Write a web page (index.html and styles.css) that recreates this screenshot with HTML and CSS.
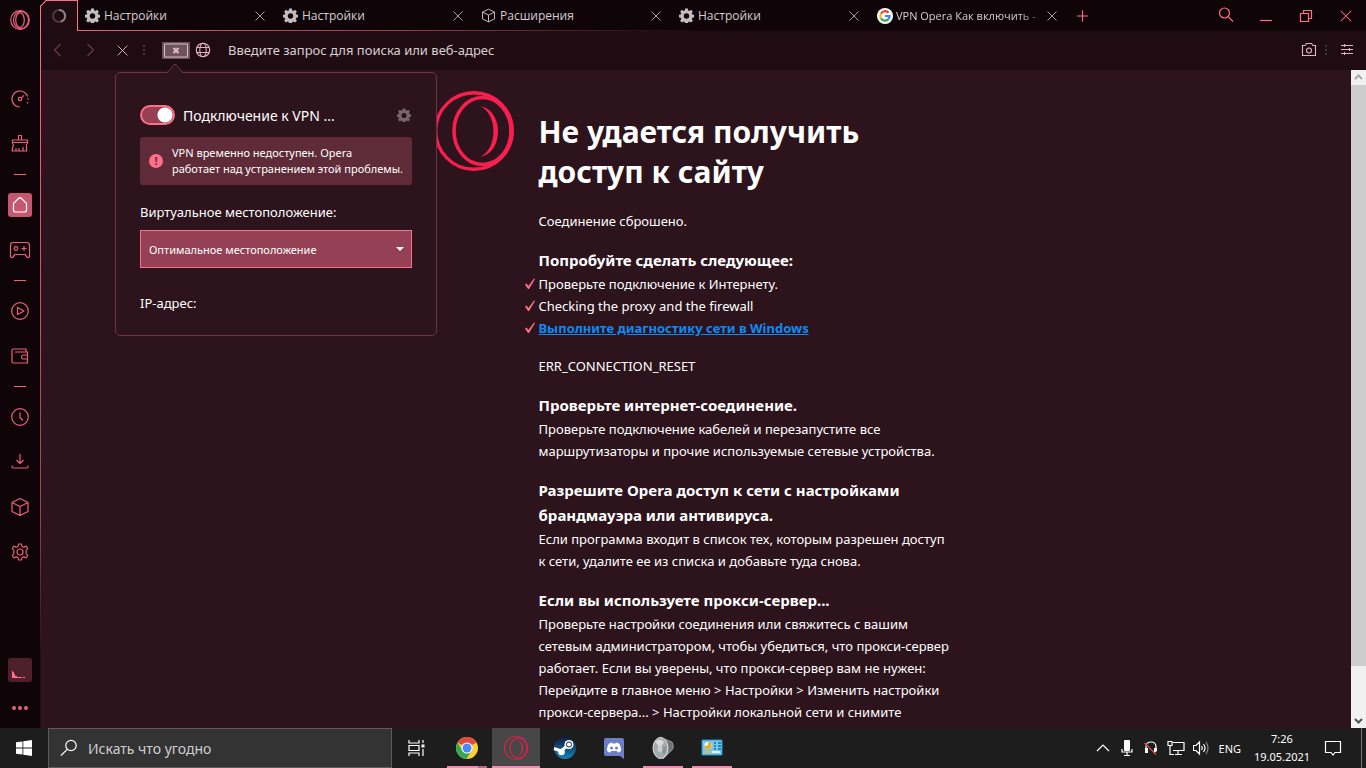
FILE: index.html
```html
<!DOCTYPE html>
<html lang="ru">
<head>
<meta charset="utf-8">
<title>Не удается получить доступ к сайту</title>
<link rel="stylesheet" href="styles.css">
</head>
<body>
<svg class="sprite" aria-hidden="true">
  <symbol id="gear-solid" viewBox="0 0 16 16"><path fill-rule="evenodd" d="M6.500 .5h3l.4 2.100 1.100.5 1.800-1.200 2 2-1.200 1.800.5 1.200 1.900.4v2.800l-1.900.4-.5 1.200 1.200 1.800-2 2-1.800-1.200-1.100.5-.4 2.100h-3l-.4-2.100-1.100-.5-1.800 1.200-2-2 1.200-1.800-.5-1.200L0 10.100V7.300l1.900-.4.5-1.200-1.200-1.800 2-2 1.800 1.200 1.100-.5zM8 5.600a2.900 2.900 0 1 0 0 5.800 2.900 2.900 0 0 0 0-5.800z"/></symbol>
  <symbol id="cross" viewBox="0 0 12 12"><path d="M1.500 1.500l9 9M10.500 1.500l-9 9" fill="none" stroke="currentColor" stroke-width=".9"/></symbol>
  <symbol id="cube" viewBox="0 0 20 20"><path d="M10 1.500l8 4v9l-8 4-8-4v-9zM2 5.500l8 4 8-4M10 9.500v9" fill="none" stroke="currentColor" stroke-width="1.200" stroke-linejoin="round"/></symbol>
  <symbol id="opera" viewBox="0 0 80 80"><g fill="none" stroke="currentColor"><circle cx="40" cy="40" r="38.300" stroke-width="3.400"/><ellipse cx="48.500" cy="40" rx="28.500" ry="33.500" stroke-width="3.600"/></g><path fill="currentColor" d="M46 15C70 19 70 62 46 66 64 58 64 23 46 15z"/></symbol>
  <symbol id="check" viewBox="0 0 12 12"><path d="M1 6.500L2.500 5.500 4.500 8 10 .5 11 1 5 11H4z" fill="currentColor"/></symbol>
</svg>

<div class="desktop">
<main class="window">
  <nav class="sidebar" aria-label="Боковая панель">
    <button class="side-logo" aria-label="Opera"><svg viewBox="0 0 20 20" width="20" height="20" fill="none" stroke="currentColor"><circle cx="10" cy="10" r="9.300"/><ellipse cx="11" cy="10" rx="7.500" ry="8.600"/><ellipse cx="10" cy="10" rx="4.300" ry="7.300"/></svg></button>
    <div class="side-group">
      <button aria-label="Скорость"><svg viewBox="0 0 20 20" width="20" height="20"><path d="M10 18A8 8 0 1 1 17.500 7.500M11.200 9.200L14 6.300"/><circle cx="10" cy="10" r="1.700"/><path d="M18 9v2.500M17.500 13v1.500" stroke-dasharray="1.500 1"/></svg></button>
      <button aria-label="Очистка"><svg viewBox="0 0 20 20" width="20" height="20"><path d="M8.500 6V1.500h3V6M2.500 10V6h15v4M2.500 8.500h15M3.500 10L2 17h14.500V10M6 14v3M9 14v3M13 13v4"/></svg></button>
    </div>
    <hr>
    <div class="side-group">
      <button class="home" aria-label="Главная"><svg viewBox="0 0 20 20" width="20" height="20"><path d="M3.500 8.500L8.500 3.500q1.500-1.500 3 0l5 5V15q0 2-2 2h-9q-2 0-2-2z"/></svg></button>
      <button aria-label="Игры"><svg viewBox="0 0 22 20" width="22" height="20"><path d="M4 2.500h14q2 0 2.500 3V16q0 2-2 1.500L16 14.500H6L3.500 17.500Q1.500 18 1.500 16V5.500q0-3 2.500-3z"/><circle cx="7" cy="8.500" r="1.800"/><path d="M15 6v5M12.500 8.500h5"/></svg></button>
    </div>
    <hr>
    <div class="side-group">
      <button aria-label="Плеер"><svg viewBox="0 0 20 20" width="20" height="20"><circle cx="10" cy="10" r="8.300"/><path d="M7.500 6.500v7l6.500-3.500z"/></svg></button>
      <button aria-label="Кошелек"><svg viewBox="0 0 20 20" width="20" height="20"><path d="M16 6V3H3.500Q2 3 2 4.500v11Q2 17 3.500 17h14V6H5M17.500 9H13q-1.500 0-1.500 2t1.500 2h4.500"/></svg></button>
    </div>
    <hr>
    <div class="side-group">
      <button aria-label="История"><svg viewBox="0 0 20 20" width="20" height="20"><circle cx="10" cy="10" r="8.300"/><path d="M10 5.500V10.500l3 3"/></svg></button>
      <button aria-label="Загрузки"><svg viewBox="0 0 20 20" width="20" height="20"><path d="M10 2v9M6.500 8l3.500 3.500L13.500 8M2 13.500v1q0 1.500 1.500 1.500h13q1.500 0 1.500-1.500v-1"/></svg></button>
      <button aria-label="Расширения"><svg width="20" height="20"><use href="#cube"/></svg></button>
      <button aria-label="Настройки"><svg viewBox="0 0 20 20" width="20" height="20"><path d="M8.500 2h3l.5 2.500 1.800.8L16 4l1.700 2.500-1.500 2v3l1.500 2L16 16l-2.200-1.200-1.800.8-.5 2.400h-3L8 15.600l-1.800-.8L4 16l-1.700-2.500 1.500-2v-3l-1.500-2L4 4l2.200 1.300L8 4.500z"/><circle cx="10" cy="10" r="3"/></svg></button>
    </div>
    <div class="side-bottom">
      <button class="meter" aria-label="GX Control"><svg viewBox="0 0 24 24" width="24" height="24"><path d="M4 13h1v1h1v2h1v2h2v1h5v1H4zM15 19h2v1h-2z"/></svg></button>
      <button class="more" aria-label="Ещё"><i></i><i></i><i></i></button>
    </div>
  </nav>

  <section class="browser">
    <header class="tabs">
      <button class="tab-active" aria-label="Загрузка"><svg viewBox="0 0 16 16" width="16" height="16" fill="none" stroke-width="2"><circle cx="8" cy="8" r="6" stroke="#4b3b42"/><path d="M8 2a6 6 0 0 1 2 11.700" stroke="#928389"/></svg></button>
      <div class="tab"><svg class="tab-icon"><use href="#gear-solid"/></svg><span>Настройки</span><button aria-label="Закрыть"><svg width="12" height="12"><use href="#cross"/></svg></button></div>
      <div class="tab"><svg class="tab-icon"><use href="#gear-solid"/></svg><span>Настройки</span><button aria-label="Закрыть"><svg width="12" height="12"><use href="#cross"/></svg></button></div>
      <div class="tab"><svg class="tab-icon"><use href="#cube"/></svg><span>Расширения</span><button aria-label="Закрыть"><svg width="12" height="12"><use href="#cross"/></svg></button></div>
      <div class="tab"><svg class="tab-icon"><use href="#gear-solid"/></svg><span>Настройки</span><button aria-label="Закрыть"><svg width="12" height="12"><use href="#cross"/></svg></button></div>
      <div class="tab"><svg class="tab-icon" viewBox="0 0 16 16"><circle cx="8" cy="8" r="8" fill="#fff"/><g fill="none" stroke-width="2.200"><path d="M11.500 4.700A4.700 4.700 0 0 0 3.900 5.700" stroke="#ea4335"/><path d="M3.900 5.700a4.700 4.700 0 0 0 0 4.600" stroke="#fbbc05"/><path d="M3.900 10.300a4.700 4.700 0 0 0 7.300 1.100" stroke="#34a853"/><path d="M11.200 11.400A4.700 4.700 0 0 0 12.600 8H8" stroke="#4285f4"/></g></svg><span class="fade">VPN Opera Как включить -</span><button aria-label="Закрыть"><svg width="12" height="12"><use href="#cross"/></svg></button></div>
      <button class="new-tab" aria-label="Новая вкладка"><svg viewBox="0 0 12 12" width="12" height="12"><path d="M6.500 .5v11M1 6h11"/></svg></button>
      <div class="controls">
        <button aria-label="Поиск"><svg viewBox="0 0 16 16" width="16" height="16"><circle cx="6.500" cy="5" r="5"/><path d="M10.200 8.700l4.800 4.800"/></svg></button>
        <button aria-label="Свернуть"><svg viewBox="0 0 12 12" width="12" height="12"><path d="M0 10.500h12"/></svg></button>
        <button aria-label="Развернуть"><svg viewBox="0 0 12 12" width="12" height="12"><path d="M.5 3.500h8v8h-8zM3.500 3V.5h8v8H9"/></svg></button>
        <button aria-label="Закрыть окно"><svg width="14" height="14"><use href="#cross"/></svg></button>
      </div>
    </header>

    <div class="toolbar">
      <button class="dim" aria-label="Назад"><svg viewBox="0 0 14 14" width="14" height="14"><path d="M9.500 1L3.500 7l6 6"/></svg></button>
      <button class="dim" aria-label="Вперед"><svg viewBox="0 0 14 14" width="14" height="14"><path d="M4.500 1l6 6-6 6"/></svg></button>
      <button aria-label="Остановить"><svg width="13" height="13"><use href="#cross"/></svg></button>
      <i class="dots"></i>
      <button class="vpn" aria-label="VPN"><svg viewBox="0 0 28 17" width="28" height="17"><rect x="2.500" y="2" width="23" height="13" rx="1"/><path d="M11.500 6l5 5M16.500 6l-5 5" stroke-width="2.400"/></svg></button>
      <svg class="globe" viewBox="0 0 16 16" width="16" height="16"><circle cx="8" cy="8" r="6.700"/><ellipse cx="8" cy="8" rx="3.200" ry="6.700"/><path d="M2 5.500h12M2 10.500h12"/></svg>
      <input class="address" type="text" aria-label="Адрес" placeholder="Введите запрос для поиска или веб-адрес">
      <button aria-label="Снимок"><svg viewBox="0 0 16 16" width="16" height="16"><path d="M1.500 3.500H4l1.500-2h5l1.500 2h2.500v10h-13z"/><circle cx="8" cy="8.500" r="2.500"/></svg></button>
      <i class="dots tail"></i>
      <button class="easy" aria-label="Простая настройка"><svg viewBox="0 0 14 14" width="14" height="14"><path d="M1 2.500h12M1 6.500h12M1 10.500h12M4.500 1v3M9.500 5v3M4.500 9v3"/></svg></button>
    </div>

    <div class="viewport">
      <article class="page">
        <svg class="brand"><use href="#opera"/></svg>
        <div class="copy">
          <h1>Не удается получить<br>доступ к сайту</h1>
          <p>Соединение сброшено.</p>
          <h2>Попробуйте сделать следующее:</h2>
          <ul>
            <li><svg><use href="#check"/></svg>Проверьте подключение к Интернету.</li>
            <li><svg><use href="#check"/></svg>Checking the proxy and the firewall</li>
            <li><svg><use href="#check"/></svg><a href="#">Выполните диагностику сети в Windows</a></li>
          </ul>
          <p>ERR_CONNECTION_RESET</p>
          <h2>Проверьте интернет-соединение.</h2>
          <p>Проверьте подключение кабелей и перезапустите все<br>маршрутизаторы и прочие используемые сетевые устройства.</p>
          <h2>Разрешите Opera доступ к сети с настройками<br>брандмауэра или антивируса.</h2>
          <p>Если программа входит в список тех, которым разрешен доступ<br>к сети, удалите ее из списка и добавьте туда снова.</p>
          <h2>Если вы используете прокси-сервер...</h2>
          <p>Проверьте настройки соединения или свяжитесь с вашим<br>сетевым администратором, чтобы убедиться, что прокси-сервер<br>работает. Если вы уверены, что прокси-сервер вам не нужен:<br>Перейдите в главное меню &gt; Настройки &gt; Изменить настройки<br>прокси-сервера... &gt; Настройки локальной сети и снимите</p>
        </div>
      </article>
      <div class="scrollbar">
        <svg class="up" viewBox="0 0 15 15"><path d="M4 9l3.500-3.500L11 9"/></svg>
        <div class="track"><div class="thumb"></div></div>
        <svg class="down" viewBox="0 0 15 15"><path d="M4 6l3.500 3.500L11 6"/></svg>
      </div>
    </div>

    <aside class="popover">
      <svg class="pointer" viewBox="0 0 18 10" width="18" height="10"><path d="M1 10L7.500 2q1.500-1.500 3 0L17 10"/></svg>
      <div class="switch-row">
        <input type="checkbox" id="vpn" checked>
        <label for="vpn">Подключение к VPN ...</label>
        <button aria-label="Настройки VPN"><svg width="14" height="14"><use href="#gear-solid"/></svg></button>
      </div>
      <div class="alert"><b>!</b><span>VPN временно недоступен. Opera<br>работает над устранением этой проблемы.</span></div>
      <label class="place-label" for="place">Виртуальное местоположение:</label>
      <div class="select-box"><select id="place"><option>Оптимальное местоположение</option></select><i></i></div>
      <div class="ip">IP-адрес:</div>
    </aside>
  </section>
</main>

<footer class="taskbar">
  <button class="start" aria-label="Пуск"><svg viewBox="0 0 16 16" width="16" height="16" fill="#fff"><path d="M0 2.300L6.500 1.400v6.200H0zM7.300 1.300L16 0v7.600H7.300zM0 8.400h6.500v6.200L0 13.700zM7.300 8.400H16V16l-8.700-1.300z"/></svg></button>
  <div class="find"><svg viewBox="0 0 18 18" width="18" height="18"><circle cx="11" cy="6.500" r="5.200"/><path d="M7.200 10.300L1 16.500"/></svg><input type="text" aria-label="Поиск" placeholder="Искать что угодно"></div>
  <button class="start" aria-label="Представление задач"><svg viewBox="0 0 17 16" width="17" height="16" fill="none" stroke="#fff" stroke-width="1.200"><path d="M1 0v3h10V0M1 16v-3h10v3M1 5.500h10v5H1zM15 0v3M15 9v7"/><path d="M13.500 4.500h3v3h-3z" fill="#fff" stroke="none"/></svg></button>
  <div class="apps">
    <button class="open more-windows" aria-label="Chrome"><svg viewBox="0 0 24 24" width="24" height="24"><circle cx="12" cy="12" r="11" fill="#fbcf3b"/><path d="M12 12L2.500 6.500A11 11 0 0 1 21.500 6.500z" fill="#e2493b"/><path d="M2.500 6.500A11 11 0 0 0 11.500 23L16.500 14.500 7.500 14.500z" fill="#35a852"/><circle cx="12" cy="12" r="5.600" fill="#fff"/><circle cx="12" cy="12" r="4.500" fill="#4a8af4"/></svg></button>
    <button class="active" aria-label="Opera"><svg class="gx" width="24" height="24"><use href="#opera"/></svg></button>
    <button aria-label="Steam"><svg viewBox="0 0 24 24" width="24" height="24"><defs><linearGradient id="st" x2="0" y2="1"><stop stop-color="#101b3e"/><stop offset="1" stop-color="#1583b9"/></linearGradient></defs><circle cx="12" cy="12" r="11" fill="url(#st)"/><path d="M1 12.500l7 2.500 6-5" fill="none" stroke="#fff" stroke-width="3"/><circle cx="8.500" cy="16" r="3.300" fill="#fff"/><circle cx="16" cy="8.500" r="4.500" fill="#fff"/><circle cx="16" cy="8.500" r="2.600" fill="#fff" stroke="#12244c"/></svg></button>
    <button aria-label="Discord"><svg viewBox="0 0 24 24" width="24" height="24"><path d="M4 2h16q2 0 2 2v19l-4-3H4q-2 0-2-2V4q0-2 2-2z" fill="#6c7fc4"/><path d="M7 7.500l3-1 .5 1h3l.5-1 3 1c1.500 2 2.200 5 2 7.500l-3 1.700-1.200-1.700H9.200L8 16.700 5 15c-.2-2.500.5-5.500 2-7.500z" fill="#fff"/><circle cx="9.500" cy="12" r="1.500" fill="#6c7fc4"/><circle cx="14.500" cy="12" r="1.500" fill="#6c7fc4"/></svg></button>
    <button class="open" aria-label="Звук"><svg viewBox="0 0 24 24" width="24" height="24"><path d="M9 1l12 5q3 6-1 9l-8 8z" fill="#6f7375" stroke="#aaa" stroke-width=".8"/><ellipse cx="9.500" cy="12" rx="7.500" ry="10.500" fill="#a5aaac" stroke="#dcdcdc"/><path d="M9 12L4 5.500Q9 2 13 6z" fill="#d9dcdd"/><path d="M9 12l6-2q1 6-2 9z" fill="#8c9193"/><ellipse cx="9" cy="13" rx="2.500" ry="3.500" fill="#c8cccd"/></svg></button>
    <button class="open" aria-label="Панель управления"><svg viewBox="0 0 24 24" width="24" height="24"><path d="M2 4h20v15H2z" fill="#73cbf0" stroke="#288fc6"/><circle cx="8" cy="9.500" r="3.500" fill="#fff"/><path d="M8 9.500V6a3.500 3.500 0 1 1-3.500 3.500z" fill="#f5a91d"/><path d="M14 7h2M14 10h2M14 13h2M18 7h3M18 10h3M18 13h3" stroke="#1468a0" stroke-width="1.500"/><path d="M4 16h16" stroke="#fff" stroke-width="1.500"/><path d="M4 16h8" stroke="#dba624" stroke-width="1.500"/></svg></button>
  </div>
  <div class="tray">
    <svg viewBox="0 0 16 16" width="16" height="16"><path d="M2 11l6-6 6 6"/></svg>
    <svg viewBox="0 0 16 16" width="16" height="16"><rect x="5" y="0" width="6" height="11" rx="1" fill="#fff" stroke="none"/><path d="M3 9v3h10V9M8 12v3M5 15.500h6"/></svg>
    <svg viewBox="0 0 16 16" width="16" height="16"><path d="M3 10V7q0-5 5-5t5 5v4"/><path d="M2 8h3v5H2zM11 8h3v3l-3 2z" fill="#fff" stroke="none"/><path d="M1.500 3L13 14.500" stroke="#e04a4a"/></svg>
    <svg viewBox="0 0 18 16" width="18" height="16"><path d="M6 2.500h11v8H6M11 11v3M8 14.500h7M1 1.500h4v4H1zM3 5.500v9h4"/></svg>
    <svg viewBox="0 0 16 16" width="16" height="16"><path d="M.5 5.500H3l3.500-3.500v12L3 10.500H.5zM8.500 6q1.500 2 0 4M10.500 4q3 4 0 8"/><path d="M13 2q4 6 0 12" stroke="#888"/></svg>
    <span class="lang">ENG</span>
    <time class="clock">7:26<br>19.05.2021</time>
    <svg class="note" viewBox="0 0 18 18" width="18" height="18"><path d="M1.500 2.500h15v11H11l-2 2.500-2-2.500H1.500z"/></svg>
    <i class="peek"></i>
  </div>
</footer>
</div>
</body>
</html>
```
FILE: styles.css
```css
* { box-sizing: border-box; }
body { margin: 0; font-family: "Noto Sans", "Open Sans", sans-serif; font-size: 13px; color: #fff; background: #0f0508; }
button { margin: 0; padding: 0; border: 0; background: none; color: inherit; font: inherit; display: flex; align-items: center; justify-content: center; flex: none; }
input, select { font: inherit; color: inherit; }
svg { flex: none; display: block; }
.sprite { position: absolute; width: 0; height: 0; }
.desktop { height: 100vh; display: flex; flex-direction: column; overflow: hidden; }
.window { flex: 1; min-height: 0; display: flex; }

.sidebar { width: 40px; flex: none; display: flex; flex-direction: column; align-items: center; background: #0f0508; color: #e8627c; }
.sidebar svg { fill: none; stroke: currentColor; stroke-width: 1.2; stroke-linejoin: round; }
.side-logo { height: 40px; margin-bottom: 47px; }
.side-group { display: flex; flex-direction: column; gap: 21px; }
.side-group button { width: 24px; height: 24px; }
.sidebar hr { width: 12px; height: 1px; margin: 18px 0; border: 0; background: #e8627c; }
.side-group .home { background: #c65770; border-radius: 3px; color: #fff; }
.side-bottom { margin-top: auto; padding-bottom: 16px; display: flex; flex-direction: column; align-items: center; gap: 22px; }
.meter { width: 24px; height: 24px; border-radius: 3px; background: #4d202c; }
.sidebar .meter svg { fill: #ff7088; stroke: none; }
.more { gap: 2px; height: 8px; }
.more i { width: 4px; height: 4px; border-radius: 2px; background: #e8627c; }

.browser { flex: 1; min-width: 0; position: relative; display: flex; flex-direction: column; padding-left: 1px; background: linear-gradient(#ff6f87, #9c4054 70%, #1f0c13 90%) left 6px / 1px 100% no-repeat #0f0508; }
.tabs { height: 31px; flex: none; display: flex; background: linear-gradient(90deg, #f0647c, #8f3548 30%, #12060a 50%) bottom / 100% 1px no-repeat, #0f0508; }
.tab-active { width: 38px; margin-left: -1px; padding-left: 1px; background: linear-gradient(135deg, #0f0508 4px, #ff6f87 4px 5px, #1f0c13 5px); border-right: 1px solid #ff6f87; box-shadow: inset 1px 0 #ff6f87, inset 0 1px #ff6f87; clip-path: polygon(6px 0, 100% 0, 100% 100%, 0 100%, 0 6px); }
.tab { width: 198px; flex: 0 1 198px; min-width: 0; display: flex; align-items: center; gap: 4px; padding: 0 6px 0 7px; color: #d5cdd0; font-family: "Open Sans", sans-serif; font-size: 12px; }
.tab:nth-child(6) { gap: 3px; font-size: 11px; }
.tab-icon { width: 15px; height: 15px; fill: #c4bdc0; }
.tab:nth-child(6) .tab-icon { width: 16px; height: 16px; }
.tab span { flex: 1; white-space: nowrap; }
.tab .fade { -webkit-mask-image: linear-gradient(90deg, #000 85%, transparent 110%); mask-image: linear-gradient(90deg, #000 85%, transparent 110%); }
.tab button { width: 20px; height: 20px; color: #b9b0b3; }
.new-tab { width: 28px; color: #ff6f87; }
.new-tab svg, .controls svg { fill: none; stroke: currentColor; stroke-width: 1.2; }
.controls svg { overflow: visible; }
.controls { margin-left: auto; display: flex; color: #ff6f87; }
.controls button { width: 40px; }

.toolbar { height: 39px; flex: none; display: flex; align-items: center; padding: 0 3px 1px 1px; background: #1f0c13; color: #e6b3c2; }
.toolbar svg { fill: none; stroke: currentColor; stroke-width: 1.1; }
.toolbar button { width: 32px; height: 32px; }
.toolbar .dim { color: #6b3d4b; }
.dots { width: 2px; height: 10px; margin: 0 17px 0 5px; background: repeating-linear-gradient(#49303a 0 2px, transparent 2px 4px); }
.dots.tail { margin: 0 4px 0 0; }
.toolbar .vpn { width: 28px; height: 17px; background: #6b555d; }
.globe { margin-left: 5px; }
.address { flex: 1; min-width: 0; margin-left: 17px; padding: 0; border: 0; background: none; font-size: 13px; outline: 0; }
.address::placeholder { color: #d8cfd2; opacity: 1; }

.viewport { flex: 1; min-height: 0; display: flex; background: #2c131c; }
.page { flex: 1; min-width: 0; height: 100%; overflow: hidden; display: flex; justify-content: center; gap: 25px; padding-top: 21px; }
.brand { width: 80px; height: 80px; color: #fa1e4e; }
.copy { flex: 0 0 420px; padding-top: 21px; white-space: nowrap; }
h1 { margin: 0 0 18px; font-size: 30px; line-height: 40px; }
h2 { margin: 0; font-size: 15px; line-height: 25px; }
.copy p, .copy ul { margin: 0 0 16px; padding: 0; line-height: 22px; list-style: none; }
.copy li { display: flex; align-items: center; gap: 3px; margin-left: -15px; }
.copy li svg { width: 12px; height: 12px; color: #ff6f87; }
.copy a { color: #0a8cf8; font-weight: bold; }
.scrollbar { width: 15px; flex: none; display: flex; flex-direction: column; background: #f1f1f1; }
.scrollbar svg { width: 15px; height: 15px; fill: none; stroke: #505050; stroke-width: 2; }
.scrollbar .up { stroke: #a9a9a9; }
.track { flex: 1; }
.thumb { height: 92.5%; background: #cdcdcd; }

.popover { position: absolute; top: 72px; left: 75px; width: 322px; padding: 32px 24px 22px; background: #2c131c; border: 1px solid #6f3145; border-radius: 5px; }
.pointer { position: absolute; top: -10px; left: 50px; fill: #2c131c; stroke: #6f3145; }
.switch-row { display: flex; align-items: center; height: 20px; margin-bottom: 12px; font-size: 14px; }
.switch-row input { appearance: none; width: 35px; height: 20px; margin: 0 8px 0 0; border: 2px solid #ff6f87; border-radius: 10px; background: radial-gradient(circle at 23px 8px, #fff 7px, transparent 8px) #954054; }
.switch-row button { margin: 0 1px 0 auto; }
.switch-row svg { fill: #77666c; }
.alert { display: flex; align-items: center; gap: 9px; height: 48px; padding-left: 9px; border-radius: 3px; background: #602b38; font-size: 11px; line-height: 16px; white-space: nowrap; }
.alert b { width: 14px; height: 14px; flex: none; border-radius: 7px; background: #ff6f87; color: #602b38; text-align: center; line-height: 14px; }
.place-label { display: block; margin: 17px 0 8px; line-height: 20px; font-size: 13px; }
.select-box { position: relative; }
.select-box select { appearance: none; width: 100%; height: 38px; padding: 0 8px; border: 1px solid #ff6f87; border-radius: 0; background: #954054; font-size: 11px; }
.select-box i { position: absolute; right: 8px; top: 17px; border: 4px solid transparent; border-top-color: #fff; }
.ip { margin-top: 25px; line-height: 20px; }

.taskbar { height: 40px; flex: none; display: flex; background: #1d1d1d; }
.start { width: 48px; }
.find { flex: 0 1 344px; display: flex; align-items: center; gap: 10px; padding: 0 11px; background: #333; border: 1px solid #5e5e5e; }
.find svg, .tray svg { fill: none; stroke: #fff; stroke-width: 1.2; }
.find input { flex: 1; min-width: 0; padding: 0; border: 0; background: none; font-size: 14px; }
.find input::placeholder { color: #d0d0d0; opacity: 1; }
.apps { display: flex; gap: 1px; margin-left: 3px; }
.apps button { width: 48px; height: 40px; }
.apps .open { background: linear-gradient(#f58ab0, #f58ab0) bottom / 40px 2px no-repeat; }
.apps .more-windows { background: linear-gradient(90deg, #f58ab0 31px, #b4688a 31px) bottom / 40px 2px no-repeat; }
.apps .active { background: linear-gradient(#f58ab0, #f58ab0) bottom / 48px 2px no-repeat, #474747; }
.gx { color: #e51e4b; }
.tray { margin-left: auto; display: flex; align-items: center; gap: 8px; font-size: 11px; }
.lang { margin-left: 2px; }
.clock { width: 60px; text-align: center; line-height: 18px; white-space: nowrap; margin-left: 3px; }
.note { margin-left: 4px; }
.peek { width: 1px; height: 100%; margin: 0 4px 0 11px; background: #777; }
```
